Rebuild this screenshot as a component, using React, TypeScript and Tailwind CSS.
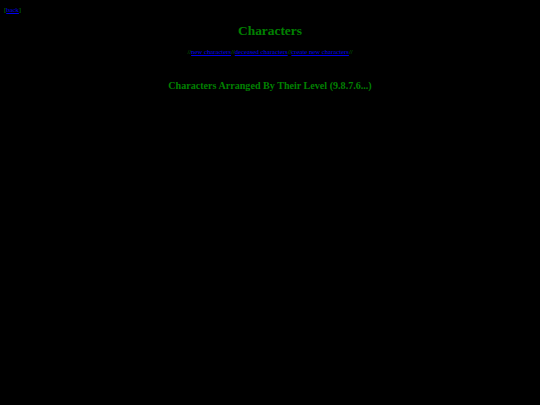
export default function App() {
  return (
    <div className="min-h-screen bg-black text-[6.7px] leading-[1.15] text-[#008000] px-[4px] pt-[6px] font-['Liberation_Serif',serif]">
      {/* Back link */}
      <div>
        [<a href="#" className="text-[#0000ee] underline">back</a>]
      </div>

      {/* Title */}
      <h1 className="mt-[9px] text-center text-[13.4px] font-bold">Characters</h1>

      {/* Nav */}
      <div className="mt-[10px] text-center">
        //<a href="#" className="text-[#0000ee] underline">new characters</a>
        //<a href="#" className="text-[#0000ee] underline">deceased characters</a>
        //<a href="#" className="text-[#0000ee] underline">create new characters</a>//
      </div>

      {/* Section */}
      <h2 className="mt-[24px] text-center text-[10.1px] font-bold">Characters Arranged By Their Level (9.8.7.6...)</h2>
    </div>
  );
}
